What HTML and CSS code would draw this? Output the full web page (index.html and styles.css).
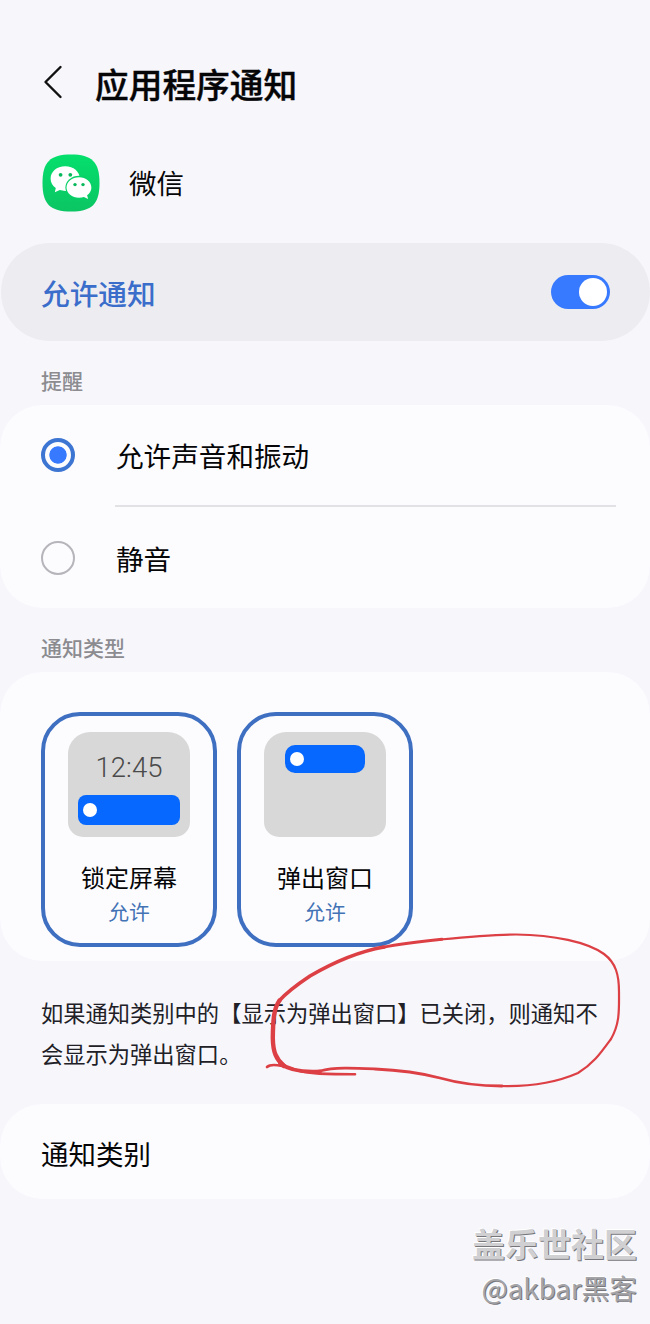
FILE: index.html
```
<!DOCTYPE html>
<html lang="zh-CN">
<head>
    <meta charset="UTF-8">
    <meta name="viewport" content="width=device-width, initial-scale=1.0">
    <title>应用程序通知</title>
    <link rel="stylesheet" href="styles.css">
</head>
<body>
    <div class="container">
        <header>
            <svg class="back-icon" viewBox="0 0 20 34">
                <path d="M17.5 2 L2.5 17 L17.5 32"/>
            </svg>
            <h1>应用程序通知</h1>
        </header>

        <div class="app-row">
            <svg class="app-icon" viewBox="0 0 58 58">
                <defs>
                    <linearGradient id="green" x1="0" y1="0" x2="0" y2="1">
                        <stop offset="0" stop-color="#05df6c"/>
                        <stop offset="1" stop-color="#0bc563"/>
                    </linearGradient>
                </defs>
                <path fill="url(#green)" d="M29 0.5 C50 0.5 57.5 8 57.5 29 C57.5 50 50 57.5 29 57.5 C8 57.5 0.5 50 0.5 29 C0.5 8 8 0.5 29 0.5 Z"/>
                <path fill="#fff" d="M23.2 12.3 C14.8 12.3 8.6 17.7 8.6 24.7 C8.6 28.7 10.6 31.9 13.8 34.1 L12.8 38.3 L17.8 36.1 C19.6 36.6 21.4 36.9 23.2 36.9 C31.6 36.9 37.8 31.4 37.8 24.7 C37.8 17.7 31.6 12.3 23.2 12.3 Z"/>
                <ellipse cx="37" cy="33.4" rx="13.6" ry="11.6" fill="#08d067"/>
                <path fill="#fff" d="M37 23.2 C30 23.2 24.5 27.8 24.5 33.5 C24.5 39.2 30 43.7 37 43.7 C38.8 43.7 40.4 43.4 41.9 42.9 L46.1 44.9 L45.1 41.2 C47.8 39.3 49.4 36.6 49.4 33.5 C49.4 27.8 44 23.2 37 23.2 Z"/>
                <g fill="#08b95b">
                    <circle cx="18.6" cy="20.8" r="1.9"/>
                    <circle cx="28.3" cy="20.8" r="1.9"/>
                    <circle cx="33" cy="30.6" r="1.7"/>
                    <circle cx="41" cy="30.6" r="1.7"/>
                </g>
            </svg>
            <span class="app-name">微信</span>
        </div>

        <div class="allow-bar">
            <span>允许通知</span>
            <div class="switch"><div class="knob"></div></div>
        </div>

        <h2>提醒</h2>
        <div class="card radio-group">
            <div class="radio-row">
                <span class="radio checked"></span>
                <span class="radio-label">允许声音和振动</span>
            </div>
            <hr>
            <div class="radio-row">
                <span class="radio"></span>
                <span class="radio-label">静音</span>
            </div>
        </div>

        <h2>通知类型</h2>
        <div class="card types">
            <div class="type-item">
                <div class="preview lock">
                    <div class="clock">12:45</div>
                    <div class="bubble"></div>
                </div>
                <div class="type-name">锁定屏幕</div>
                <div class="type-state">允许</div>
            </div>
            <div class="type-item">
                <div class="preview popup">
                    <div class="bubble"></div>
                </div>
                <div class="type-name">弹出窗口</div>
                <div class="type-state">允许</div>
            </div>
        </div>

        <p class="note">如果通知类别中的【显示为弹出窗口】已关闭，则通知不<br>会显示为弹出窗口。</p>

        <div class="card category">通知类别</div>

        <footer>
            <div class="community">盖乐世社区</div>
            <div class="author">@akbar黑客</div>
        </footer>

        <!-- hand-drawn circle over the note -->
        <svg class="marker" viewBox="0 0 400 180">
            <path stroke-width="2.2" d="M190 19.5 C220 16.5 242 14.5 266 14.5 C304 15 337 22 354 34 C366 43 369 55 369 72 C369 90 370 103 361 119 C350 134 343 144 328 153 C303 164 278 167 248 166"/>
            <path stroke-width="2.9" d="M132 27.5 C152 23.5 170 21.5 192 19.3"/>
            <path stroke-width="3.6" d="M134 27 C106 32 84 42 60 56 C48 64 37 72 29 81"/>
            <path stroke-width="4.4" d="M29.5 80.5 C24 88 23 99 22.8 118 C23 132 26 139 34 146"/>
            <path stroke-width="3.8" d="M30 143 C40 151 54 152.5 70 151.5"/>
            <path stroke-width="2.8" d="M70 151 C84 147 104 148 125 149 C149 150 171 153 190 158 C211 164 228 166 252 166"/>
            <path stroke-width="2.6" d="M17 147 C21 143 31 145 43 149 C57 154 75 154 105 154.3"/>
        </svg>
    </div>
</body>
</html>
```
FILE: styles.css
```
* {
    box-sizing: border-box;
}

body {
    margin: 0;
    background-color: #f6f6fb;
    font-family: "Noto Sans CJK SC", sans-serif;
    color: #060608;
}

.container {
    position: relative;
    width: 650px;
    height: 1324px;
    overflow: hidden;
}

header {
    display: flex;
    align-items: center;
    height: 154px;
    padding: 14px 0 0 43px;
}

.back-icon {
    width: 20px;
    height: 34px;
    margin-bottom: 5px;
    fill: none;
    stroke: #111;
    stroke-width: 2.4;
    stroke-linecap: round;
    stroke-linejoin: round;
}

h1 {
    margin: 0 0 0 32px;
    font-size: 33.7px;
    font-weight: 500;
    line-height: 48px;
    -webkit-text-stroke: 0.4px #060608;
}

.app-row {
    display: flex;
    align-items: center;
    height: 58px;
    margin-bottom: 31px;
    padding-left: 42px;
    font-size: 27.5px;
    line-height: 40px;
}

.app-name {
    margin-bottom: 3px;
}

.app-icon {
    width: 58px;
    height: 58px;
    margin-right: 29px;
}

.allow-bar {
    display: flex;
    align-items: center;
    justify-content: space-between;
    height: 98px;
    margin: 0 0 0 1px;
    padding: 0 40px;
    border-radius: 49px;
    background-color: #ededf1;
    color: #3b6dcb;
    font-size: 28.7px;
    font-weight: 500;
}

.switch {
    width: 59px;
    height: 34px;
    padding: 3px;
    border-radius: 17px;
    background-color: #387aff;
}

.knob {
    width: 28px;
    height: 28px;
    margin-left: 25px;
    border-radius: 50%;
    background-color: #fff;
}

h2 {
    margin: 0;
    padding: 23px 0 0 41px;
    height: 64px;
    font-size: 21px;
    font-weight: 500;
    line-height: 32px;
    color: #8b8b90;
}

.card {
    border-radius: 42px;
    background-color: #fcfcff;
}

.radio-group {
    height: 203px;
}

.radio-row {
    display: flex;
    align-items: center;
    height: 100px;
    padding-left: 41px;
    font-size: 27.6px;
    line-height: 40px;
}

.radio-group hr {
    height: 2px;
    margin: 0 34px 0 115px;
    border: none;
    background-color: #e2e2e6;
}

.radio {
    width: 34px;
    height: 34px;
    border: 2px solid #b5b5ba;
    border-radius: 50%;
    margin-right: 41px;
}

.radio.checked {
    border: 4px solid #3d75d2;
    background: radial-gradient(circle, #387aff 8.3px, transparent 9px);
}

.radio-row:last-child {
    height: 102px;
}

.types {
    display: flex;
    gap: 20px;
    height: 289px;
    padding: 40px 41px 0;
}

.type-item {
    width: 176px;
    height: 235px;
    padding-top: 16px;
    border: 4px solid #3e6fc1;
    border-radius: 39px;
    text-align: center;
}

.preview {
    width: 122px;
    height: 105px;
    margin: 0 auto 23px;
    padding-top: 16px;
    border-radius: 22px 22px 15px 15px;
    background-color: #d8d8d8;
}

.clock {
    height: 47px;
    font-family: Roboto, sans-serif;
    font-size: 27.5px;
    font-weight: 300;
    line-height: 40px;
    color: #4a4a4a;
}

.bubble {
    display: flex;
    align-items: center;
    width: 102px;
    height: 30px;
    margin: 0 auto;
    padding-left: 5px;
    border-radius: 8px;
    background-color: #0668ff;
}

.bubble::before {
    content: "";
    width: 14px;
    height: 14px;
    border-radius: 50%;
    background-color: #fff;
}

.popup {
    padding-top: 13px;
}

.popup .bubble {
    width: 80px;
    height: 28px;
    border-radius: 10px;
}

.type-name {
    font-size: 24px;
    line-height: 34px;
}

.type-state {
    font-size: 20.8px;
    line-height: 35px;
    color: #4373b5;
}

.note {
    height: 143px;
    margin: 0;
    padding: 31px 0 0 41px;
    font-size: 22.27px;
    line-height: 41px;
    white-space: nowrap;
    color: #202026;
}

.category {
    height: 95px;
    padding-left: 41px;
    font-size: 27.5px;
    line-height: 98px;
}

footer {
    display: flex;
    flex-direction: column;
    align-items: flex-end;
    padding: 19px 13px 0 0;
    color: #d0d0d3;
}

.community {
    font-size: 33px;
    font-weight: 700;
    line-height: 50px;
    text-shadow: 1px 1px 0 #77777b, -1px -1px 0 #fff;
}

.author {
    font-size: 27.7px;
    line-height: 38px;
    color: #a5a5a9;
    text-shadow: 1px 1px 0 #77777b, -1px -1px 0 #fff;
}

.marker {
    position: absolute;
    left: 250px;
    top: 920px;
    width: 400px;
    height: 180px;
    fill: none;
    stroke: #dc3f44;
    stroke-linecap: round;
}
```
